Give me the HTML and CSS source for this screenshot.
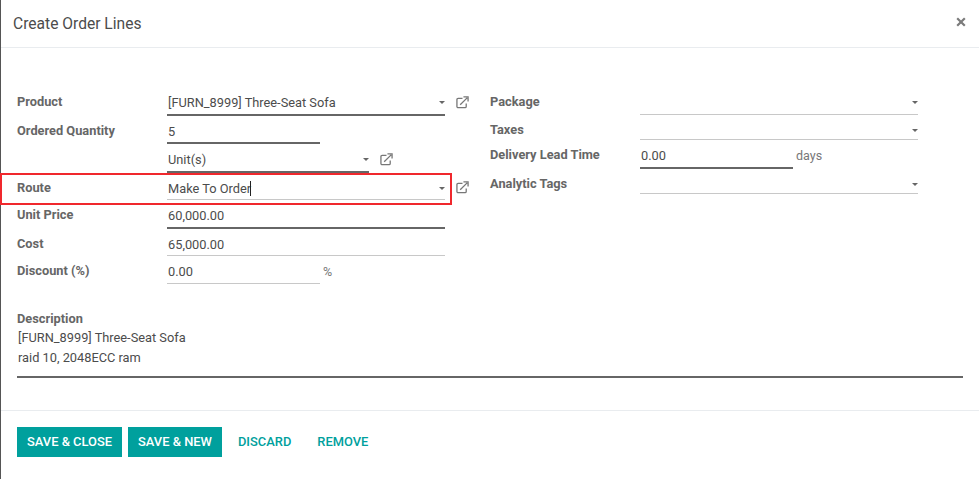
FILE: index.html
```html
<!DOCTYPE html>
<html lang="en">
<head>
<meta charset="utf-8">
<title>Create Order Lines</title>
<link rel="stylesheet" href="styles.css">
</head>
<body>
<div class="modal">
  <header class="modal-header">
    <h4 class="modal-title">Create Order Lines</h4>
    <svg class="close" viewBox="0 0 10 10" aria-label="Close"><path d="M1.2 1.2 8.8 8.8M8.8 1.2 1.2 8.8"/></svg>
  </header>
  <main class="modal-body">
    <div class="columns">
      <section class="col col-left">
        <div class="row h29">
          <span class="label">Product</span>
          <div class="field w278 strong"><span>[FURN_8999] Three-Seat Sofa</span><i class="caret"></i></div>
          <svg class="ext" viewBox="0 0 14 14"><path d="M11 8v3.2a1.3 1.3 0 0 1-1.3 1.3H2.3A1.3 1.3 0 0 1 1 11.2V3.8a1.3 1.3 0 0 1 1.3-1.3H7"/><path d="M4.5 9.5 12 2M8 1h5v5"/></svg>
        </div>
        <div class="row h28">
          <span class="label">Ordered Quantity</span>
          <div class="field w153 strong"><span>5</span></div>
        </div>
        <div class="row h29">
          <span class="label"></span>
          <div class="field w202 strong"><span>Unit(s)</span><i class="caret"></i></div>
          <svg class="ext" viewBox="0 0 14 14"><path d="M11 8v3.2a1.3 1.3 0 0 1-1.3 1.3H2.3A1.3 1.3 0 0 1 1 11.2V3.8a1.3 1.3 0 0 1 1.3-1.3H7"/><path d="M4.5 9.5 12 2M8 1h5v5"/></svg>
        </div>
        <div class="row h27">
          <span class="label">Route</span>
          <div class="field w278"><span>Make To Order<b class="cursor"></b></span><i class="caret"></i></div>
          <svg class="ext ext-up" viewBox="0 0 14 14"><path d="M11 8v3.2a1.3 1.3 0 0 1-1.3 1.3H2.3A1.3 1.3 0 0 1 1 11.2V3.8a1.3 1.3 0 0 1 1.3-1.3H7"/><path d="M4.5 9.5 12 2M8 1h5v5"/></svg>
        </div>
        <div class="row h29">
          <span class="label">Unit Price</span>
          <div class="field w278 strong"><span>60,000.00</span></div>
        </div>
        <div class="row h27">
          <span class="label">Cost</span>
          <div class="field w278"><span>65,000.00</span></div>
        </div>
        <div class="row h28">
          <span class="label">Discount (%)</span>
          <div class="field w153"><span>0.00</span></div>
          <span class="unit">%</span>
        </div>
      </section>
      <section class="col col-right">
        <div class="row h28">
          <span class="label">Package</span>
          <div class="field w278"><span></span><i class="caret"></i></div>
        </div>
        <div class="row h25">
          <span class="label">Taxes</span>
          <div class="field w278"><span></span><i class="caret"></i></div>
        </div>
        <div class="row h29">
          <span class="label">Delivery Lead Time</span>
          <div class="field w153 strong"><span>0.00</span></div>
          <span class="unit">days</span>
        </div>
        <div class="row h25">
          <span class="label">Analytic Tags</span>
          <div class="field w278"><span></span><i class="caret"></i></div>
        </div>
      </section>
    </div>
    <section class="description">
      <div class="label">Description</div>
      <div class="desc-text">[FURN_8999] Three-Seat Sofa<br>raid 10, 2048ECC ram</div>
    </section>
  </main>
  <footer class="modal-footer">
    <button class="btn primary">SAVE &amp; CLOSE</button>
    <button class="btn primary">SAVE &amp; NEW</button>
    <button class="btn link">DISCARD</button>
    <button class="btn link">REMOVE</button>
  </footer>
  <div class="highlight"></div>
</div>
</body>
</html>
```
FILE: styles.css
```css
* { box-sizing: border-box; }
html, body { margin: 0; height: 100%; background: #fff; }
body { font-family: Roboto, "Liberation Sans", sans-serif; font-size: 12.8px; color: #4c4c4c; overflow: hidden; }
.modal { position: relative; width: 979px; height: 479px; border-left: 1px solid #555; display: flex; flex-direction: column; }
.modal-header { height: 48px; flex: none; border-bottom: 1px solid #e9ecef; padding: 0 13px 0 12px; display: flex; align-items: center; justify-content: space-between; }
.modal-title { margin: 0; font-size: 15.6px; font-weight: 400; color: #4c4c4c; }
.close { width: 10px; height: 10px; margin-top: -3px; }
.close path { stroke: #7b7b7b; stroke-width: 2.2; fill: none; }
.modal-body { height: 362px; flex: none; padding: 39px 16px 0; }
.columns { display: flex; }
.col-left { width: 473px; flex: none; }
.row { display: flex; align-items: flex-start; }
.h25 { height: 25px; } .h27 { height: 27px; } .h28 { height: 28px; } .h29 { height: 29px; }
.label { width: 150px; flex: none; font-weight: 700; color: #666; line-height: 15px; padding-top: 7px; }
.field { position: relative; height: 100%; border-bottom: 1px solid #c8c8c8; line-height: 18px; padding: 7px 0 0 1px; flex: none; }
.strong { border-bottom: 2px solid #666; }
.w278 { width: 278px; } .w202 { width: 202px; } .w153 { width: 153px; }
.caret { position: absolute; right: 0; top: 14px; width: 0; height: 0; border-left: 3px solid transparent; border-right: 3px solid transparent; border-top: 3px solid #666; }
.ext { width: 13px; height: 13px; margin: 9px 0 0 11px; fill: none; stroke: #777; stroke-width: 1.4; flex: none; }
.ext-up { margin-top: 8px; }
.unit { margin: 7px 0 0 3px; color: #777; line-height: 18px; font-size: 12.5px; }
.cursor { display: inline-block; width: 1px; height: 15px; background: #222; vertical-align: -3px; margin-left: -1px; }
.description { margin-top: 27px; }
.description .label { padding: 0; width: auto; line-height: 15px; }
.desc-text { border-bottom: 2px solid #666; line-height: 20px; height: 51px; padding: 1px 0 0 1px; margin-top: 1px; color: #4c4c4c; }
.modal-footer { flex: none; border-top: 1px solid #e9ecef; height: 69px; padding: 16px; display: flex; align-items: flex-start; gap: 6px; }
.btn { font: 500 12.9px/1 Roboto, "Liberation Sans", sans-serif; border: 0; height: 30px; padding: 0 10px; background: transparent; }
.primary { background: #00a09d; color: #fff; }
.link { color: #00a09d; }
.highlight { position: absolute; left: -1px; top: 173px; width: 452px; height: 32px; border: 2px solid #f0282d; pointer-events: none; }
```
